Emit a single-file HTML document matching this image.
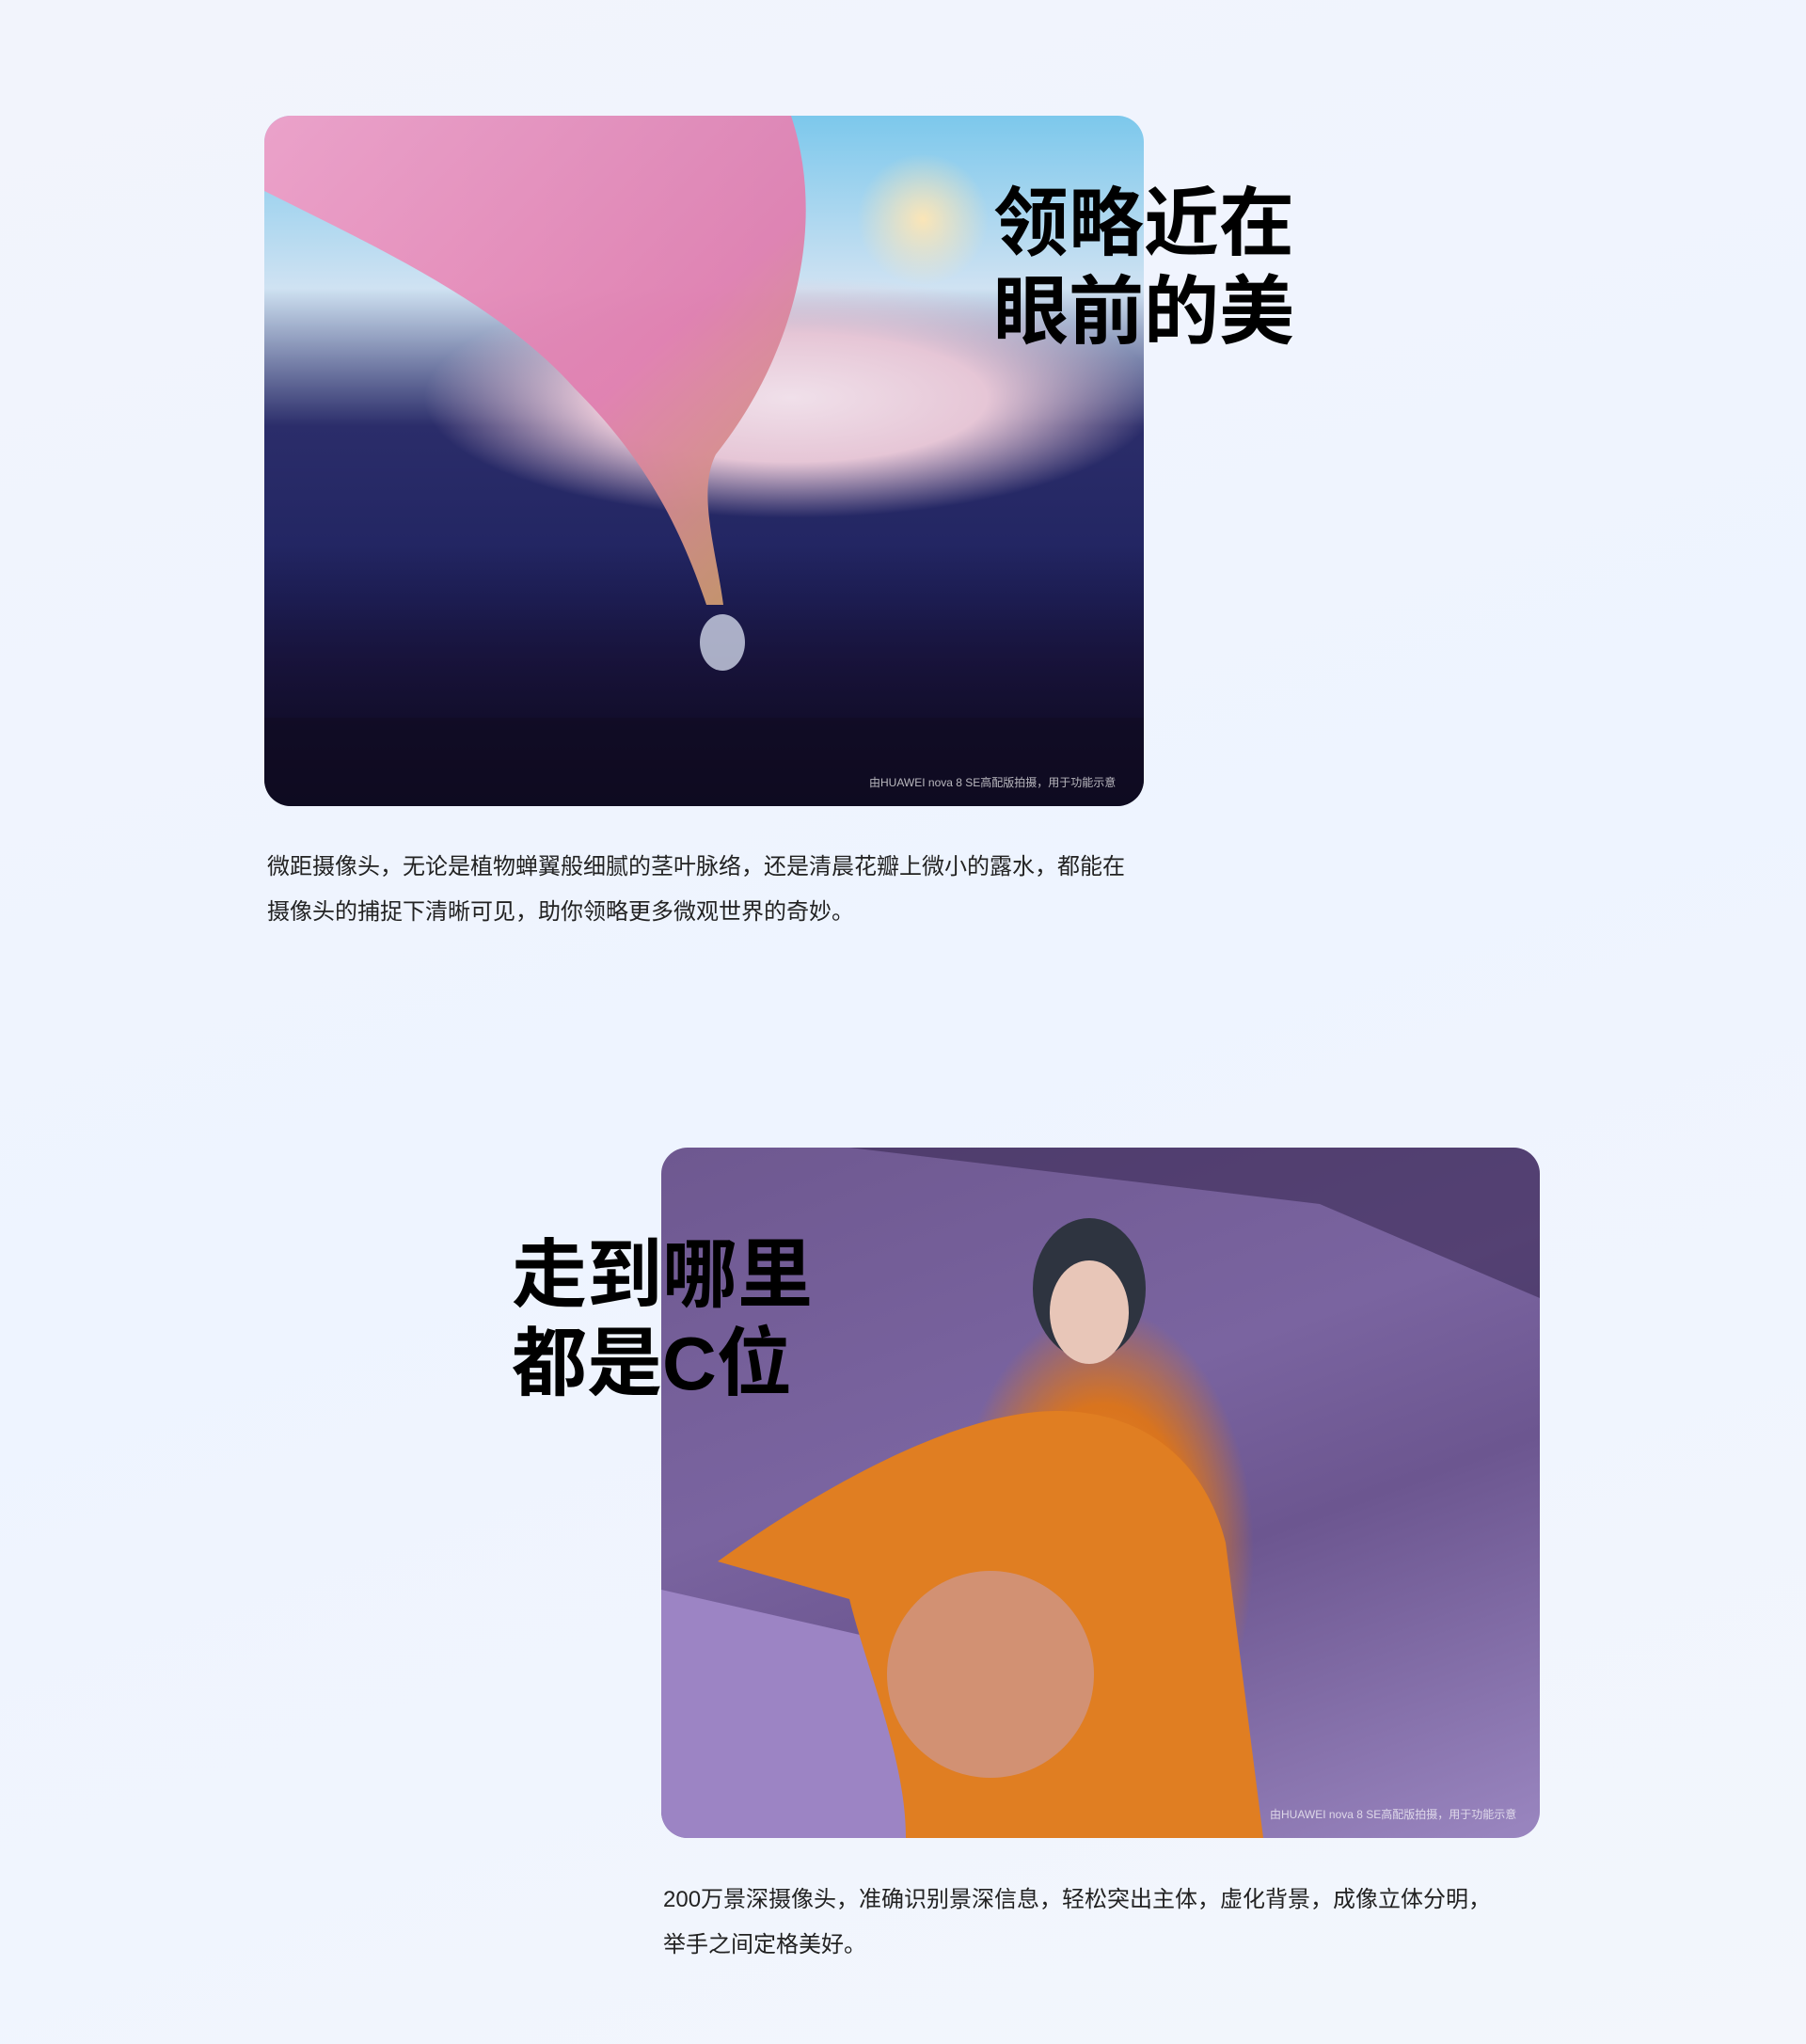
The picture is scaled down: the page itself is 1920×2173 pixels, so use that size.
<!DOCTYPE html>
<html><head><meta charset="utf-8">
<style>
*{margin:0;padding:0;box-sizing:border-box}
html,body{width:1920px;height:2173px;overflow:hidden}
body{background:linear-gradient(160deg,#f2f4fc 0%,#eef4ff 50%,#f3f6fc 100%);font-family:"Liberation Sans","Noto Sans CJK SC",sans-serif;position:relative}
.img{position:absolute;border-radius:28px;overflow:hidden}
#i1{left:281px;top:123px;width:935px;height:734px;
background:
radial-gradient(ellipse 70px 70px at 700px 110px,rgba(255,230,180,.95),rgba(255,230,180,0) 100%),
linear-gradient(180deg,rgba(0,0,0,0) 0%,rgba(0,0,0,0) 62%,rgba(20,10,40,.6) 80%,#0c0a20 100%),
radial-gradient(ellipse 520px 170px at 560px 300px,#f0e0ea 0%,#e6c6d6 40%,rgba(40,40,110,0) 75%),
linear-gradient(180deg,#7cc8ec 0%,#cfe2f2 25%,#2b2d6a 45%,#1f2360 70%,#141434 100%)}
#i2{left:703px;top:1220px;width:934px;height:734px;
background:
radial-gradient(ellipse 160px 260px at 470px 430px,#e48a2a,#d9741e 60%,rgba(200,110,40,0) 100%),
linear-gradient(160deg,#6e5890 0%,#7a64a0 40%,#6c5690 60%,#9a86c0 100%)}
h2{position:absolute;font-size:80px;line-height:94px;font-weight:bold;color:#000;letter-spacing:0}
p{position:absolute;font-size:24px;line-height:48px;color:#222}
.cap{position:absolute;font-size:12px;color:rgba(255,255,255,.7)}
</style></head><body>
<div class="img" id="i1">
<svg width="935" height="734" style="position:absolute;left:0;top:0">
<defs><linearGradient id="pk" x1="0" y1="0" x2="1" y2="1"><stop offset="0" stop-color="#f0a0c8"/><stop offset=".6" stop-color="#e07fb0"/><stop offset="1" stop-color="#c8a060"/></linearGradient></defs>
<path d="M0 0 L560 0 C600 120 560 260 480 360 C460 400 480 460 488 520 L470 520 C440 430 400 360 330 290 C250 200 120 140 0 80 Z" fill="url(#pk)" opacity=".95"/>
<ellipse cx="487" cy="560" rx="24" ry="30" fill="#cfd6e8" opacity=".8"/>
<rect x="0" y="640" width="935" height="94" fill="#100c22" opacity=".6"/>
</svg>
<div class="cap" style="left:643px;top:700px">由HUAWEI nova 8 SE高配版拍摄，用于功能示意</div>
</div>
<h2 style="left:1056px;top:191px">领略近在<br>眼前的美</h2>
<p style="left:284px;top:898px">微距摄像头，无论是植物蝉翼般细腻的茎叶脉络，还是清晨花瓣上微小的露水，都能在<br>摄像头的捕捉下清晰可见，助你领略更多微观世界的奇妙。</p>

<div class="img" id="i2">
<svg width="934" height="734" style="position:absolute;left:0;top:0">
<path d="M200 0 L934 0 L934 160 L700 60 Z" fill="#3a2a55" opacity=".6"/>
<path d="M0 470 L220 520 L320 600 L300 734 L0 734 Z" fill="#9c84c4"/>
<ellipse cx="455" cy="150" rx="60" ry="75" fill="#2e3440"/>
<ellipse cx="455" cy="175" rx="42" ry="55" fill="#e8c6b8"/>
<path d="M60 440 C200 340 330 280 420 280 C520 280 580 340 600 420 L640 734 L260 734 C260 650 220 560 200 480 Z" fill="#e07e22"/>
<circle cx="350" cy="560" r="110" fill="#c0a8d8" opacity=".45"/>
</svg>
<div class="cap" style="left:647px;top:700px">由HUAWEI nova 8 SE高配版拍摄，用于功能示意</div>
</div>
<h2 style="left:544px;top:1309px">走到哪里<br>都是C位</h2>
<p style="left:705px;top:1996px">200万景深摄像头，准确识别景深信息，轻松突出主体，虚化背景，成像立体分明，<br>举手之间定格美好。</p>
</body></html>
